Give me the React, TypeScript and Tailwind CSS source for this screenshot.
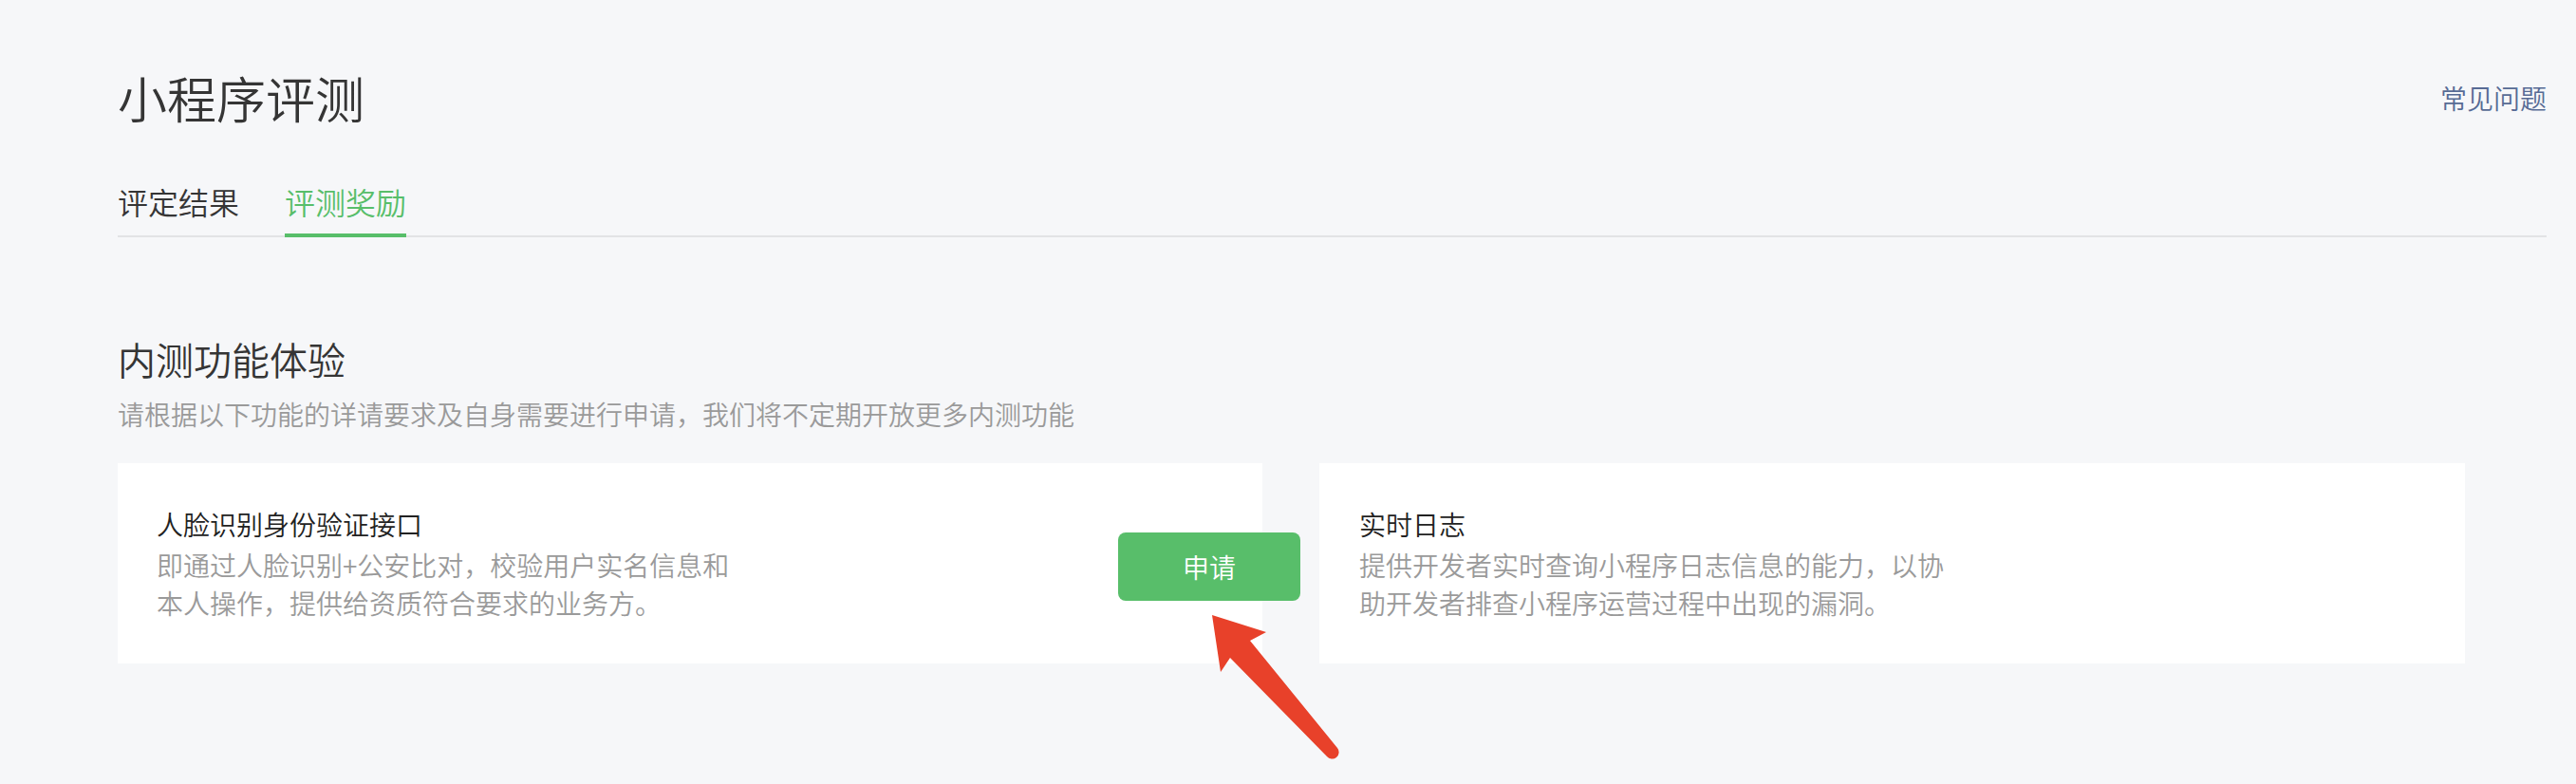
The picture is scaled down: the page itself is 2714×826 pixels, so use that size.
export default function App() {
  return (
    <div className="relative min-h-screen w-full bg-[#f6f7f9] pl-[124px] pr-[31px] pt-[77px] font-[350] font-['Noto_Sans_CJK_SC','Noto_Sans',sans-serif]">
      <div className="flex items-center justify-between">
        <h1 className="text-[52px] leading-[52px] font-[350] text-[#353535]">小程序评测</h1>
        <a className="text-[28px] leading-[40px] text-[#576b95] cursor-pointer">常见问题</a>
      </div>

      <div className="mt-[63px] flex gap-[48px] border-b-2 border-[#e2e3e5]">
        <div className="pb-[14px] text-[32px] leading-[40px] text-[#353535]">评定结果</div>
        <div className="-mb-[2px] border-b-4 border-[#58be6a] pb-[14px] text-[32px] leading-[40px] text-[#58be6a]">评测奖励</div>
      </div>

      <h2 className="mt-[104px] text-[40px] leading-[48px] font-[350] text-[#353535]">内测功能体验</h2>
      <p className="mt-[14px] text-[28px] leading-[40px] text-[#9a9a9a]">
        请根据以下功能的详请要求及自身需要进行申请，我们将不定期开放更多内测功能
      </p>

      <div className="mt-[32px] flex gap-[60px]">
        <div className="flex h-[211px] w-[1206px] items-center justify-between bg-white px-[41px]">
          <div>
            <div className="mb-[3px] text-[28px] leading-[40px] text-[#222222]">人脸识别身份验证接口</div>
            <div className="max-w-[620px] text-[28px] leading-[40px] text-[#9a9a9a]">
              即通过人脸识别+公安比对，校验用户实名信息和本人操作，提供给资质符合要求的业务方。
            </div>
          </div>
          <button className="-mr-[81px] mt-[7px] flex h-[72px] w-[192px] items-center justify-center rounded-[8px] bg-[#58be6a] text-[28px] leading-[40px] font-[350] text-white">
            申请
          </button>
        </div>
        <div className="flex h-[211px] w-[1207px] items-center bg-white px-[42px]">
          <div>
            <div className="mb-[3px] text-[28px] leading-[40px] text-[#222222]">实时日志</div>
            <div className="max-w-[620px] text-[28px] leading-[40px] text-[#9a9a9a]">
              提供开发者实时查询小程序日志信息的能力，以协助开发者排查小程序运营过程中出现的漏洞。
            </div>
          </div>
        </div>
      </div>

      <svg
        className="pointer-events-none absolute left-[1270px] top-[640px] h-[170px] w-[150px]"
        viewBox="1270 640 150 170"
      >
        <path
          d="M1277 648 L1334 666 L1317 675 L1409 788 A7 7 0 0 1 1398 797 L1296 693 L1286 708 Z"
          fill="#e8412a"
        />
      </svg>
    </div>
  );
}
